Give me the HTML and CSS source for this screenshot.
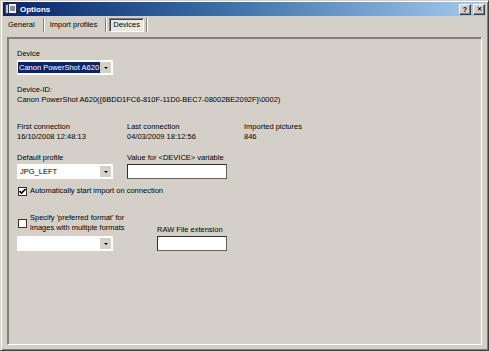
FILE: index.html
```html
<!DOCTYPE html>
<html lang="en">
<head>
    <meta charset="UTF-8">
    <meta name="viewport" content="width=device-width, initial-scale=1.0">
    <title>Options</title>
    <link rel="stylesheet" href="styles.css">
</head>
<body>
    <div class="window">
        <div class="titlebar">
            <svg class="app-icon" width="12" height="12" viewBox="0 0 12 12">
                <rect x="0.5" y="1.5" width="8" height="9" fill="#c8c8c8" stroke="#404040"/>
                <rect x="3.5" y="0.5" width="8" height="10" fill="#f0f0f0" stroke="#303030"/>
                <rect x="5" y="3" width="5" height="5" fill="#8090a8"/>
            </svg>
            <span class="title">Options</span>
            <div class="caption-buttons">
                <span class="cap-btn">?</span>
                <span class="cap-btn close">&#10005;</span>
            </div>
        </div>

        <div class="tabs">
            <span class="tab">General</span>
            <span class="tab-sep"></span>
            <span class="tab">Import profiles</span>
            <span class="tab-sep"></span>
            <span class="tab active">Devices</span>
            <span class="tab-sep last"></span>
        </div>

        <div class="panel">
            <div class="field">
                <label>Device</label>
                <div class="combo device-combo">
                    <span class="combo-value selected">Canon PowerShot A620</span>
                    <span class="combo-btn"><i class="arrow"></i></span>
                </div>
            </div>

            <div class="field device-id">
                <span>Device-ID:</span>
                <span>Canon PowerShot A620({6BDD1FC6-810F-11D0-BEC7-08002BE2092F}\0002)</span>
            </div>

            <div class="stats">
                <div class="stat">
                    <span>First connection</span>
                    <span>16/10/2008 12:48:13</span>
                </div>
                <div class="stat">
                    <span>Last connection</span>
                    <span>04/03/2009 18:12:56</span>
                </div>
                <div class="stat">
                    <span>Imported pictures</span>
                    <span>846</span>
                </div>
            </div>

            <div class="profile-row">
                <div class="field col-left">
                    <label>Default profile</label>
                    <div class="combo">
                        <span class="combo-value">JPG_LEFT</span>
                        <span class="combo-btn"><i class="arrow"></i></span>
                    </div>
                </div>
                <div class="field">
                    <label>Value for &lt;DEVICE&gt; variable</label>
                    <div class="textbox wide"></div>
                </div>
            </div>

            <label class="check">
                <span class="box checked">
                    <svg width="7" height="7" viewBox="0 0 7 7"><path d="M0.5 3 L2.5 5 L6.5 1" fill="none" stroke="#000" stroke-width="1.6"/></svg>
                </span>
                Automatically start import on connection
            </label>

            <div class="format-row">
                <div class="col-format">
                    <label class="check two-line">
                        <span class="box"></span>
                        <span>Specify 'preferred format' for<br>images with multiple formats</span>
                    </label>
                    <div class="combo">
                        <span class="combo-value"></span>
                        <span class="combo-btn"><i class="arrow"></i></span>
                    </div>
                </div>
                <div class="field">
                    <label>RAW File extension</label>
                    <div class="textbox narrow"></div>
                </div>
            </div>
        </div>
    </div>
</body>
</html>
```

FILE: styles.css
```css
body {
    margin: 0;
    background-color: #d4d0c8;
    font-family: "Liberation Sans", Arial, sans-serif;
    font-size: 7.5px;
    color: #000;
}
.window {
    width: 489px;
    height: 351px;
    box-sizing: border-box;
    background-color: #d4d0c8;
    border: 1px solid;
    border-color: #d4d0c8 #404040 #404040 #d4d0c8;
    box-shadow: inset 1px 1px #fff, inset -1px -1px #808080;
    padding: 1px 2px 2px 2px;
    display: flex;
    flex-direction: column;
}
.titlebar {
    height: 14px;
    display: flex;
    align-items: center;
    padding: 0 1px 0 2px;
    background: linear-gradient(to right, #0a246a 0%, #3a6ea5 45%, #a6caf0 100%);
}
.app-icon {
    margin-right: 3px;
}
.title {
    color: #fff;
    font-weight: bold;
    font-size: 8px;
    flex: 1;
}
.caption-buttons {
    display: flex;
    gap: 2px;
}
.cap-btn {
    width: 10px;
    height: 9px;
    background-color: #d4d0c8;
    border: 1px solid;
    border-color: #fff #404040 #404040 #fff;
    box-shadow: inset -1px -1px #808080;
    font-size: 7px;
    font-weight: bold;
    line-height: 9px;
    text-align: center;
}
.cap-btn.close {
    font-size: 6px;
}
.tabs {
    display: flex;
    align-items: center;
    height: 16px;
    margin-top: 1px;
    padding-left: 2px;
}
.tab {
    padding: 0 2px;
    line-height: 12px;
    border: 1px solid transparent;
}
.tab-sep {
    width: 1px;
    height: 14px;
    background-color: #808080;
    border-right: 1px solid #fff;
    margin: 0 2px 0 5px;
}
.tab.active {
    padding: 0 3px;
    background-color: #e9e7e2;
    border-color: #808080 #fff #fff #808080;
    box-shadow: inset 1px 1px #404040;
}
.tab-sep.last {
    margin-left: 2px;
}
.panel {
    flex: 1;
    margin: 4px 4px 3px 4px;
    border: 1px solid;
    border-color: #808080 #fff #fff #808080;
    box-shadow: 1px 1px #808080 inset, -1px -1px #d4d0c8 inset;
    padding: 11px 9px 0 9px;
}
label {
    display: block;
}
.field {
    display: flex;
    flex-direction: column;
}
.field > label,
.field > span {
    line-height: 10px;
}
.combo {
    width: 96px;
    height: 15px;
    box-sizing: border-box;
    background-color: #fff;
    display: flex;
    align-items: center;
    padding: 2px 2px 2px 1px;
    margin-top: 1px;
}
.combo-value {
    flex: 1;
    line-height: 11px;
    padding-left: 2px;
}
.combo-value.selected {
    flex: none;
    background-color: #0a246a;
    color: #fff;
    padding: 0 1px;
    margin-right: auto;
}
.combo-btn {
    width: 11px;
    height: 11px;
    background-color: #d4d0c8;
    display: flex;
    align-items: center;
    justify-content: center;
}
.arrow {
    width: 0;
    height: 0;
    border-left: 2px solid transparent;
    border-right: 2px solid transparent;
    border-top: 2px solid #000;
}
.device-combo {
    width: 96px;
    background-color: #fff;
}
.device-id {
    margin-top: 10px;
}
.stats {
    display: flex;
    margin-top: 17px;
}
.stat {
    display: flex;
    flex-direction: column;
    line-height: 10px;
    width: 110px;
}
.stat + .stat {
    width: 117px;
}
.profile-row {
    display: flex;
    margin-top: 11px;
}
.col-left {
    width: 110px;
}
.textbox {
    height: 15px;
    box-sizing: border-box;
    background-color: #fff;
    border: 1px solid;
    border-color: #303030 #606060 #606060 #303030;
    margin-top: 1px;
}
.textbox.wide {
    width: 100px;
}
.textbox.narrow {
    width: 70px;
}
.check {
    display: flex;
    align-items: center;
    gap: 3px;
    margin-top: 7px;
    margin-left: 1px;
    line-height: 10px;
}
.box {
    width: 9px;
    height: 9px;
    box-sizing: border-box;
    background-color: #fff;
    border: 1px solid #333;
    display: flex;
    align-items: center;
    justify-content: center;
}
.format-row {
    display: flex;
    align-items: flex-end;
    margin-top: 17px;
}
.col-format {
    width: 140px;
}
.check.two-line {
    margin-top: 0;
    margin-bottom: 3px;
}
```
